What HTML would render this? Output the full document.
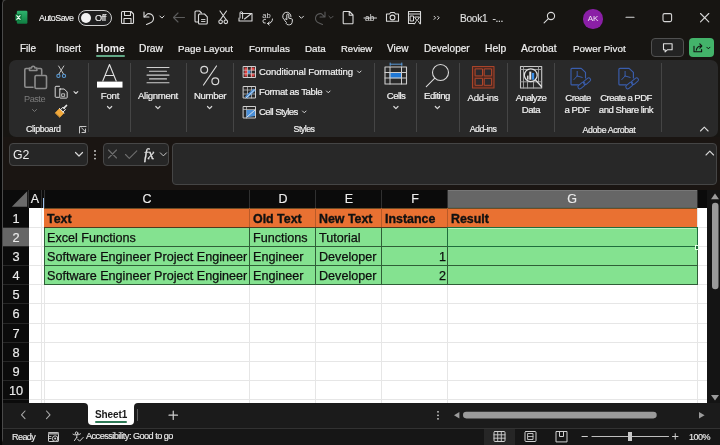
<!DOCTYPE html>
<html><head><meta charset="utf-8">
<style>
*{margin:0;padding:0;box-sizing:border-box}
html,body{width:720px;height:445px;overflow:hidden;background:#171512;font-family:"Liberation Sans",sans-serif;color:#e6e6e6}
.a{position:absolute}
.t{position:absolute;white-space:nowrap;line-height:1;will-change:transform}
svg{position:absolute;overflow:visible}
</style></head><body>
<div class="a" style="left:0;top:0;width:1.5px;height:445px;background:#050505"></div>
<div class="a" style="left:1.5px;top:-1.5px;width:740px;height:446px;border-left:1.8px solid #4a4a4a;border-top:1.5px solid #4a4a4a;border-bottom:1.5px solid #4a4a4a;border-radius:5px 0 0 6px"></div>
<svg style="left:0;top:0" width="40" height="30">
<defs><linearGradient id="xg" x1="0" y1="0" x2="0" y2="1"><stop offset="0" stop-color="#2fb36f"/><stop offset="0.5" stop-color="#1f9a58"/><stop offset="1" stop-color="#107c41"/></linearGradient></defs>
<rect x="16.8" y="10.7" width="10.6" height="13.1" rx="1.2" fill="url(#xg)"/>
<rect x="15.2" y="13.9" width="6.5" height="7" rx="0.8" fill="#107a3e"/>
<path d="M16.8 15.6 l3.3 3.7 M20.1 15.6 l-3.3 3.7" stroke="#f4fff8" stroke-width="1.1" stroke-linecap="round"/>
</svg>
<div class="t" style="left:39.00px;top:13.95px;font-size:8.9px;color:#f0f0f0;letter-spacing:-0.5px;-webkit-text-stroke:0.15px #f0f0f0">AutoSave</div>
<div class="a" style="left:78px;top:10px;width:34px;height:15.5px;border:1.3px solid #cfcfcf;border-radius:8px;background:#1e1e1e"></div>
<div class="a" style="left:80.5px;top:12.5px;width:10.8px;height:10.8px;border-radius:50%;background:#f2f2f2"></div>
<div class="t" style="left:95.30px;top:13.72px;font-size:9.2px;color:#f0f0f0;letter-spacing:-0.4px;-webkit-text-stroke:0.15px #f0f0f0">Off</div>
<div class="t" style="left:460.00px;top:13.80px;font-size:10.2px;color:#e0e0e0;letter-spacing:-0.3px;-webkit-text-stroke:0.1px #e0e0e0">Book1 &nbsp;-...</div>
<div class="a" style="left:583px;top:9px;width:19.5px;height:19.5px;border-radius:50%;background:#8a1fa6"></div>
<div class="t" style="left:532.75px;width:120px;text-align:center;top:14.56px;font-size:8px;color:#f0e6f4;">AK</div>
<div class="t" style="left:19.50px;top:43.62px;font-size:10px;color:#f0f0f0;-webkit-text-stroke:0.2px #f0f0f0">File</div>
<div class="t" style="left:55.50px;top:43.62px;font-size:10px;color:#f0f0f0;-webkit-text-stroke:0.2px #f0f0f0">Insert</div>
<div class="t" style="left:96.00px;top:43.59px;font-size:10.3px;color:#f0f0f0;font-weight:bold">Home</div>
<div class="t" style="left:138.50px;top:43.59px;font-size:10.3px;color:#f0f0f0;-webkit-text-stroke:0.2px #f0f0f0">Draw</div>
<div class="t" style="left:177.50px;top:43.65px;font-size:9.8px;color:#f0f0f0;-webkit-text-stroke:0.2px #f0f0f0">Page Layout</div>
<div class="t" style="left:248.50px;top:43.65px;font-size:9.8px;color:#f0f0f0;-webkit-text-stroke:0.2px #f0f0f0">Formulas</div>
<div class="t" style="left:305.00px;top:43.65px;font-size:9.8px;color:#f0f0f0;-webkit-text-stroke:0.2px #f0f0f0">Data</div>
<div class="t" style="left:340.50px;top:43.68px;font-size:9.5px;color:#f0f0f0;-webkit-text-stroke:0.2px #f0f0f0">Review</div>
<div class="t" style="left:386.70px;top:43.62px;font-size:10px;color:#f0f0f0;-webkit-text-stroke:0.2px #f0f0f0">View</div>
<div class="t" style="left:423.70px;top:43.62px;font-size:10px;color:#f0f0f0;-webkit-text-stroke:0.2px #f0f0f0">Developer</div>
<div class="t" style="left:485.30px;top:43.59px;font-size:10.3px;color:#f0f0f0;-webkit-text-stroke:0.2px #f0f0f0">Help</div>
<div class="t" style="left:520.80px;top:43.59px;font-size:10.3px;color:#f0f0f0;-webkit-text-stroke:0.2px #f0f0f0">Acrobat</div>
<div class="t" style="left:572.70px;top:43.64px;font-size:9.9px;color:#f0f0f0;-webkit-text-stroke:0.2px #f0f0f0">Power Pivot</div>
<div class="a" style="left:95.6px;top:54.8px;width:29.4px;height:2.2px;background:#62a886;border-radius:1px"></div>
<div class="a" style="left:651px;top:38px;width:33px;height:19px;border:1px solid #505050;border-radius:4px;background:#232323"></div>
<div class="a" style="left:689px;top:38px;width:24.8px;height:19px;border-radius:4px;background:#43b36a"></div>
<svg style="left:0;top:0" width="720" height="60" fill="none" stroke="#dadada" stroke-width="1.1" stroke-linecap="round" stroke-linejoin="round">
<!-- save -->
<path d="M122.5 11.5 h8.5 l2.5 2.5 v8.5 a1 1 0 0 1 -1 1 h-10 a1 1 0 0 1 -1 -1 v-10 a1 1 0 0 1 1 -1z"/>
<path d="M124.5 11.8 v3.7 h6 v-3.7"/>
<path d="M124 23.3 v-4.8 h7 v4.8"/>
<!-- undo -->
<path d="M144 12 v5 h5"/>
<path d="M144.3 16.8 l3.2 -3 a4.6 4.6 0 1 1 2.5 9.2 l-3.5 1.5" />
<path d="M159.8 16 l2.1 2.1 l2.1 -2.1" stroke-width="1"/>
<!-- back arrow dim -->
<path d="M173.5 17.5 h11 M173.5 17.5 l4.5 -4.5 M173.5 17.5 l4.5 4.5" stroke="#5c5c5c"/>
<!-- copy -->
<path d="M198.5 22 h-2.5 a1 1 0 0 1 -1 -1 v-9 a1 1 0 0 1 1 -1 h3.5 l2 2"/>
<path d="M199.5 14 h5 l2.8 2.8 v6.2 a1 1 0 0 1 -1 1 h-6.8 a1 1 0 0 1 -1 -1 v-8z"/>
<path d="M201.5 19.5 h3.5 M201.5 21.5 h3.5" stroke-width="0.9"/>
<!-- scissors -->
<path d="M220 11 l6.2 8.8 M226.5 11 l-6.2 8.8"/>
<circle cx="220.6" cy="21.8" r="1.8"/><circle cx="225.8" cy="21.8" r="1.8"/>
<!-- email/attach -->
<path d="M241 13.5 h11 v7.5 h-13 v-3"/>
<path d="M244.5 19 l7 -5.5"/>
<path d="M240 18 v-5 a1.3 1.3 0 0 1 2.6 0 v5.5" stroke-width="1"/>
<!-- spelling ab -->
<text x="262.2" y="17.6" font-size="7.6" font-family="Liberation Sans" fill="#dadada" stroke="none">ab</text>
<path d="M265.5 19.3 a2 2 0 0 0 -2.6 1.8 a2 2 0 0 0 2.4 2" stroke-width="1"/>
<path d="M272.5 19 c0 3 -2 4.5 -4.8 4.6 M267.6 23.6 l1.8 -1.8 M267.6 23.6 l1.6 1.4" stroke-width="1"/>
<!-- touch -->
<path d="M283.5 19 a4.2 4.2 0 1 1 7.5 -2.2" stroke-width="1"/>
<path d="M286.2 22.2 l-1.6 -1.9 a0.9 0.9 0 0 1 1.4 -1.1 l0.8 0.8 v-5 a1 1 0 0 1 2 0 v3.2 l2.6 0.5 a1.2 1.2 0 0 1 1 1.3 l-0.3 2.6 a2.6 2.6 0 0 1 -2.6 2.2 h-1.3 a2.2 2.2 0 0 1 -2 -1.2z" stroke-width="1"/>
<path d="M299.3 16.2 l2.1 2.1 l2.1 -2.1" stroke-width="1"/>
<!-- redo dim -->
<path d="M325 12 v5 h-5 M324.7 16.8 l-3.2 -3 a4.6 4.6 0 1 0 -2.5 9.2 l3.5 1.5" stroke="#5a5a5a"/>
<path d="M328.9 16.2 l2.1 2.1 l2.1 -2.1" stroke="#5a5a5a" stroke-width="1"/>
<!-- new doc -->
<path d="M344 11.5 h5.5 l3.5 3.5 v8 a0.8 0.8 0 0 1 -0.8 0.8 h-8.2 a0.8 0.8 0 0 1 -0.8 -0.8 v-10.7 a0.8 0.8 0 0 1 0.8 -0.8z M349.2 11.8 v3.5 h3.5"/>
<!-- strikethrough ab -->
<text x="365" y="21" font-size="8.5" font-family="Liberation Sans" fill="#dadada" stroke="none">ab</text>
<path d="M364 18 h12.5" stroke-width="1"/>
<!-- camera -->
<path d="M386.5 14 h3 l1.2 -1.5 h3.6 l1.2 1.5 h3 v7.3 h-12 z"/>
<circle cx="392.5" cy="17.5" r="2.4"/>
<!-- form -->
<path d="M408.5 11.5 h12 v12 M408.5 11.5 v12 h6 M408.5 14 h12"/>
<path d="M410.5 16 h3 v5 h-3z M415 17 h4.5 l-2.3 3.5z M416 21.5 l-1.5 2.5 M418.5 21.5 l1.5 2.5" stroke-width="1"/>
<!-- chevrons >> -->
<path d="M434 16.2 l1.6 1.6 l-1.6 1.6 M437.6 16.2 l1.6 1.6 l-1.6 1.6" stroke-width="1"/>
<!-- search -->
<circle cx="551" cy="16" r="3.6"/>
<path d="M548.4 18.6 l-4.3 4.3"/>
<!-- min max close -->
<path d="M626 17.3 h8" stroke="#d6d6d6"/>
<rect x="663" y="13.6" width="8.6" height="8" rx="1.5" stroke="#d6d6d6"/>
<path d="M700.5 13.5 l8.3 8.3 M708.8 13.5 l-8.3 8.3" stroke="#d6d6d6"/>
<!-- comment icon -->
<path d="M663.5 43.8 h8.6 v6 h-4.8 l-2.2 2 v-2 h-1.6 z" stroke="#e0e0e0" stroke-width="1.1"/>
<!-- share icon -->
<path d="M694 46.2 v5.6 h7.6 v-2.2" stroke="#111" stroke-width="1.1"/>
<path d="M696.3 50.3 c0.3 -2.5 2 -4.3 5 -4.3 M699.8 43.9 l2 2.1 l-2 2.1" stroke="#111" stroke-width="1.1"/>
<path d="M706.8 47.2 l1.6 1.6 l1.6 -1.6" stroke="#111" stroke-width="1"/>
</svg>
<div class="a" style="left:8.5px;top:60px;width:709px;height:77px;background:#292929;border-radius:7px"></div>
<div class="a" style="left:88.0px;top:63px;width:1px;height:69px;background:#454545"></div>
<div class="a" style="left:129.9px;top:63px;width:1px;height:69px;background:#454545"></div>
<div class="a" style="left:186.2px;top:63px;width:1px;height:69px;background:#454545"></div>
<div class="a" style="left:232.8px;top:63px;width:1px;height:69px;background:#454545"></div>
<div class="a" style="left:374.3px;top:63px;width:1px;height:69px;background:#454545"></div>
<div class="a" style="left:416.4px;top:63px;width:1px;height:69px;background:#454545"></div>
<div class="a" style="left:458.5px;top:63px;width:1px;height:69px;background:#454545"></div>
<div class="a" style="left:507.3px;top:63px;width:1px;height:69px;background:#454545"></div>
<div class="a" style="left:554.1px;top:63px;width:1px;height:69px;background:#454545"></div>
<div class="a" style="left:660.8px;top:63px;width:1px;height:69px;background:#454545"></div>
<svg style="left:0;top:0" width="720" height="140" fill="none" stroke="#d8d8d8" stroke-width="1.1" stroke-linecap="round" stroke-linejoin="round">
<!-- paste (disabled gray) -->
<g stroke="#8c8c8c" stroke-width="1.6">
<path d="M29 68.5 h-3 a1.2 1.2 0 0 0 -1.2 1.2 v16.3 a1.2 1.2 0 0 0 1.2 1.2 h7"/>
<path d="M38 68.5 h2.5 a1.2 1.2 0 0 1 1.2 1.2 v4.5"/>
<path d="M29.5 70.5 v-2.5 h2 a1.7 1.7 0 0 1 3.4 0 h2 v2.5 z"/>
<rect x="35" y="75.5" width="11.5" height="13" rx="1.2"/>
</g>
<path d="M32.5 109.5 l2 2 l2 -2" stroke="#777" stroke-width="1"/>
<!-- scissors blue -->
<path d="M58.6 66 l4.8 7.8 M63.8 66 l-4.8 7.8" stroke="#c4c4c4" stroke-width="1"/>
<g stroke="#5b9bd5" stroke-width="1.1">
<circle cx="58.4" cy="75.9" r="1.6"/><circle cx="64" cy="75.9" r="1.6"/>
</g>
<!-- copy -->
<path d="M59.5 86.3 h-3.5 a0.8 0.8 0 0 0 -0.8 0.8 v9.4 a0.8 0.8 0 0 0 0.8 0.8 h2.8" stroke-width="1"/>
<path d="M59.8 89 h4.4 l3 3 v5.5 a0.6 0.6 0 0 1 -0.6 0.6 h-6.2 a0.6 0.6 0 0 1 -0.6 -0.6 v-7.9 a0.6 0.6 0 0 1 0.6 -0.6z" stroke-width="1"/>
<path d="M62 93.8 h2.6 v2.6 h-2.6z" stroke-width="0.8"/>
<path d="M74 91.6 l1.9 1.9 l1.9 -1.9" stroke-width="1.1"/>
<!-- format painter -->
<path d="M55.3 112.8 l4.2 -4.3 l4.6 4.4 l-4.2 4.3 z" fill="#f2a93b" stroke="#f2a93b" stroke-width="0.6"/>
<path d="M59.5 108.5 l4.6 4.4 M60.6 109.5 l2.4 -2.3 l2.5 2.4 l-2.4 2.3" stroke="#e6e6e6" stroke-width="1"/>
<path d="M63.8 108.1 l2.8 -2.7" stroke="#e6e6e6" stroke-width="1.5"/>
<!-- dialog launcher -->
<path d="M79.5 133 v-6.5 h6.5 M81.5 127.8 l4 4 M85.5 129 v3.5 h-3.5" stroke-width="0.9"/>
<!-- Font A -->
<path d="M102.8 81 l6.7 -16.5 l6.7 16.5 M105.2 75.5 h8.6" stroke="#e0e0e0" stroke-width="1.1"/>
<rect x="97" y="81.6" width="25.5" height="6" fill="#ffffff" stroke="none"/>
<path d="M107.5 106.5 l2.1 2.1 l2.1 -2.1" stroke-width="1.2"/>
<!-- alignment -->
<path d="M147 67.5 h22 M149.5 71.3 h17 M147 75.1 h22 M149.5 78.9 h17 M147 82.7 h22" stroke="#cfcfcf" stroke-width="1.1"/>
<path d="M155.8 106.5 l2.1 2.1 l2.1 -2.1" stroke-width="1.2"/>
<!-- percent -->
<circle cx="204.2" cy="69.8" r="3.4" stroke-width="1.2"/>
<circle cx="215.3" cy="81.3" r="3.4" stroke-width="1.2"/>
<path d="M216.5 66 l-13 19" stroke-width="1.2"/>
<path d="M207.5 106.5 l2.1 2.1 l2.1 -2.1" stroke-width="1.2"/>
<!-- conditional formatting icon -->
<rect x="243.5" y="66.5" width="12" height="11" stroke="#cfcfcf" stroke-width="1"/>
<rect x="244.5" y="67.5" width="3" height="9" fill="#e04040" stroke="none"/>
<rect x="250.5" y="67.5" width="4" height="3" fill="#e04040" stroke="none"/>
<rect x="247.5" y="70.5" width="3" height="3" fill="#4a90d9" stroke="none"/>
<rect x="250.5" y="73.5" width="4" height="3" fill="#e04040" stroke="none"/>
<path d="M243.5 70.2 h12 M243.5 73.8 h12 M247.5 66.5 v11 M251.5 66.5 v11" stroke="#cfcfcf" stroke-width="0.7"/>
<!-- format as table -->
<rect x="243.5" y="86.5" width="12" height="11.5" stroke="#cfcfcf" stroke-width="1"/>
<path d="M243.5 90 h12 M243.5 94 h12 M247.5 86.5 v11.5 M251.5 86.5 v11.5" stroke="#cfcfcf" stroke-width="0.7"/>
<path d="M245 96.5 l8.5 -8 l2 2 l-8.5 8 z" fill="#4a90d9" stroke="none"/>
<path d="M246 98 l8.5 -8" stroke="#e8e8e8" stroke-width="0.8"/>
<!-- cell styles -->
<rect x="243.5" y="106.5" width="12" height="11.5" stroke="#cfcfcf" stroke-width="1"/>
<path d="M243.5 109.5 h12 M246.5 106.5 v11.5" stroke="#cfcfcf" stroke-width="0.7"/>
<path d="M246.5 110 h8.5 v6 l-8.5 1.5 z" fill="#4a90d9" stroke="none"/>
<path d="M247 117 l8 -7" stroke="#e8e8e8" stroke-width="0.9"/>
<path d="M357.5 71 l1.8 1.8 l1.8 -1.8 M326.5 91 l1.8 1.8 l1.8 -1.8 M302.5 111 l1.8 1.8 l1.8 -1.8" stroke-width="1"/>
<!-- cells -->
<path d="M390.2 64.2 h11.6 M390.2 63 v2.4 M401.8 63 v2.4" stroke="#5a9ad8" stroke-width="1"/>
<rect x="385" y="67" width="21.5" height="17" stroke="#cfcfcf" stroke-width="1.1"/>
<rect x="390" y="72.5" width="11.5" height="5.5" fill="#1f78d6" stroke="#6aa6e0" stroke-width="0.6"/>
<path d="M385 72.5 h21.5 M385 78 h21.5 M390 67 v17 M401.5 67 v17" stroke="#cfcfcf" stroke-width="1"/>
<path d="M393.8 106.5 l2.1 2.1 l2.1 -2.1" stroke-width="1.2"/>
<!-- editing magnifier -->
<circle cx="440.5" cy="72.5" r="8" stroke-width="1.1"/>
<path d="M434.8 78.2 l-8.5 8.5" stroke-width="1.1"/>
<path d="M435.3 106.5 l2.1 2.1 l2.1 -2.1" stroke-width="1.2"/>
<!-- add-ins -->
<rect x="472.5" y="66.5" width="21.5" height="21.5" fill="#4d2820" stroke="#a8442a" stroke-width="1.1"/>
<rect x="475.5" y="68.9" width="7" height="7" fill="#2a2a2e" stroke="#b0482c" stroke-width="1"/>
<rect x="484.6" y="68.9" width="7" height="7" fill="#2a2a2e" stroke="#b0482c" stroke-width="1"/>
<rect x="475.5" y="78.3" width="7" height="7" fill="#2a2a2e" stroke="#b0482c" stroke-width="1"/>
<rect x="484.6" y="78.3" width="7" height="7" fill="#2a2a2e" stroke="#b0482c" stroke-width="1"/>
<!-- analyze data -->
<rect x="520.5" y="66.5" width="21.2" height="21.5" stroke="#c8c8c8" stroke-width="1.1"/>
<path d="M520.5 69.5 h21.2 M520.5 81.8 h21.2 M523.5 66.5 v21.5 M527.5 81.8 v6.2 M533.5 81.8 v6.2 M538.5 66.5 v15.3" stroke="#a8a8a8" stroke-width="0.9"/>
<circle cx="530.8" cy="75.2" r="6.4" fill="#232323" stroke="#e2e2e2" stroke-width="1.2"/>
<path d="M535.4 79.9 l6 6.6" stroke="#e2e2e2" stroke-width="1.3"/>
<rect x="527" y="75.6" width="1.5" height="4" fill="#d8d8d8" stroke="none"/>
<rect x="529.3" y="71.6" width="2" height="8.1" fill="#e8e8e8" stroke="none"/>
<rect x="531.8" y="72.9" width="2.4" height="6.8" fill="#3a8ee6" stroke="none"/>
<!-- create pdf icons -->
<g stroke="#3a5eae" stroke-width="1.15">
<path d="M578.3 84.9 h-6.3 a1 1 0 0 1 -1 -1 v-14.6 a1 1 0 0 1 1 -1 h9.2 l4.3 4 v5.6"/>
<path d="M577.2 71.4 v4.6 M577.2 76 l-3.3 3.6 M577.2 76 l5 1.4" stroke-width="1"/>
<rect x="577.4" y="83.6" width="8.2" height="3.8" rx="1.9" transform="rotate(-40 581.5 85.5)" stroke-width="1"/>
<rect x="582.9" y="79.3" width="8.2" height="3.8" rx="1.9" transform="rotate(-40 587 81.2)" stroke-width="1"/>
</g>
<g stroke="#3a5eae" stroke-width="1.15" transform="translate(47.9,0)">
<path d="M578.3 84.9 h-6.3 a1 1 0 0 1 -1 -1 v-14.6 a1 1 0 0 1 1 -1 h9.2 l4.3 4 v5.6"/>
<path d="M577.2 71.4 v4.6 M577.2 76 l-3.3 3.6 M577.2 76 l5 1.4" stroke-width="1"/>
<rect x="577.4" y="83.6" width="8.2" height="3.8" rx="1.9" transform="rotate(-40 581.5 85.5)" stroke-width="1"/>
<rect x="582.9" y="79.3" width="8.2" height="3.8" rx="1.9" transform="rotate(-40 587 81.2)" stroke-width="1"/>
</g>
<!-- collapse -->
<path d="M700.5 131 l3.8 -3.8 l3.8 3.8" stroke-width="1.1"/>
</svg>
<div class="t" style="left:24.00px;top:95.22px;font-size:9.2px;color:#7c7c7c;letter-spacing:-0.5px">Paste</div>
<div class="t" style="left:26.00px;top:124.57px;font-size:8.8px;color:#f0f0f0;-webkit-text-stroke:0.2px #f0f0f0;letter-spacing:-0.35px">Clipboard</div>
<div class="t" style="left:49.60px;width:120px;text-align:center;top:91.37px;font-size:9.6px;color:#f0f0f0;-webkit-text-stroke:0.2px #f0f0f0;letter-spacing:-0.2px">Font</div>
<div class="t" style="left:98.00px;width:120px;text-align:center;top:91.37px;font-size:9.6px;color:#f0f0f0;-webkit-text-stroke:0.2px #f0f0f0;letter-spacing:-0.3px">Alignment</div>
<div class="t" style="left:149.60px;width:120px;text-align:center;top:91.37px;font-size:9.6px;color:#f0f0f0;-webkit-text-stroke:0.2px #f0f0f0;letter-spacing:-0.35px">Number</div>
<div class="t" style="left:258.75px;top:67.47px;font-size:9.6px;color:#f0f0f0;-webkit-text-stroke:0.2px #f0f0f0;letter-spacing:-0.12px">Conditional Formatting</div>
<div class="t" style="left:258.75px;top:87.47px;font-size:9.6px;color:#f0f0f0;-webkit-text-stroke:0.2px #f0f0f0;letter-spacing:-0.35px">Format as Table</div>
<div class="t" style="left:258.75px;top:107.47px;font-size:9.6px;color:#f0f0f0;-webkit-text-stroke:0.2px #f0f0f0;letter-spacing:-0.6px">Cell Styles</div>
<div class="t" style="left:243.80px;width:120px;text-align:center;top:125.37px;font-size:8.8px;color:#f0f0f0;-webkit-text-stroke:0.2px #f0f0f0;letter-spacing:-0.5px">Styles</div>
<div class="t" style="left:335.80px;width:120px;text-align:center;top:91.37px;font-size:9.6px;color:#f0f0f0;-webkit-text-stroke:0.2px #f0f0f0;letter-spacing:-0.6px">Cells</div>
<div class="t" style="left:377.40px;width:120px;text-align:center;top:91.37px;font-size:9.6px;color:#f0f0f0;-webkit-text-stroke:0.2px #f0f0f0;letter-spacing:-0.5px">Editing</div>
<div class="t" style="left:423.00px;width:120px;text-align:center;top:93.47px;font-size:9.6px;color:#f0f0f0;-webkit-text-stroke:0.2px #f0f0f0;letter-spacing:-0.25px">Add-ins</div>
<div class="t" style="left:422.50px;width:120px;text-align:center;top:125.37px;font-size:8.8px;color:#f0f0f0;-webkit-text-stroke:0.2px #f0f0f0;letter-spacing:-0.45px">Add-ins</div>
<div class="t" style="left:471.30px;width:120px;text-align:center;top:93.47px;font-size:9.6px;color:#f0f0f0;-webkit-text-stroke:0.2px #f0f0f0;letter-spacing:-0.5px">Analyze</div>
<div class="t" style="left:471.30px;width:120px;text-align:center;top:105.17px;font-size:9.6px;color:#f0f0f0;-webkit-text-stroke:0.2px #f0f0f0;letter-spacing:-0.5px">Data</div>
<div class="t" style="left:517.60px;width:120px;text-align:center;top:93.47px;font-size:9.6px;color:#f0f0f0;-webkit-text-stroke:0.2px #f0f0f0;letter-spacing:-0.55px">Create</div>
<div class="t" style="left:517.00px;width:120px;text-align:center;top:105.17px;font-size:9.6px;color:#f0f0f0;-webkit-text-stroke:0.2px #f0f0f0;letter-spacing:-0.4px">a PDF</div>
<div class="t" style="left:565.50px;width:120px;text-align:center;top:93.47px;font-size:9.6px;color:#f0f0f0;-webkit-text-stroke:0.2px #f0f0f0;letter-spacing:-0.6px">Create a PDF</div>
<div class="t" style="left:565.50px;width:120px;text-align:center;top:105.17px;font-size:9.6px;color:#f0f0f0;-webkit-text-stroke:0.2px #f0f0f0;letter-spacing:-0.5px">and Share link</div>
<div class="t" style="left:548.50px;width:120px;text-align:center;top:125.57px;font-size:8.8px;color:#f0f0f0;-webkit-text-stroke:0.2px #f0f0f0;letter-spacing:-0.38px">Adobe Acrobat</div>
<div class="a" style="left:3px;top:137px;width:717px;height:53px;background:#1a1512"></div>
<div class="a" style="left:9px;top:143px;width:78.5px;height:22.5px;background:#262626;border:1px solid #474747;border-radius:4px"></div>
<div class="t" style="left:12.50px;top:148.85px;font-size:12.3px;color:#ececec;">G2</div>
<div class="a" style="left:103px;top:143px;width:65.5px;height:22.5px;background:#262626;border:1px solid #474747;border-radius:4px"></div>
<div class="a" style="left:172px;top:143px;width:544.5px;height:41.5px;background:#282828;border:1px solid #454545;border-radius:4px"></div>
<svg style="left:0;top:0" width="720" height="190" fill="none" stroke="#d8d8d8" stroke-width="1.1" stroke-linecap="round" stroke-linejoin="round">
<path d="M75.5 152.5 l3.5 3.5 l3.5 -3.5" stroke-width="1.2"/>
<circle cx="95" cy="151" r="0.9" fill="#d8d8d8" stroke="none"/><circle cx="95" cy="154.8" r="0.9" fill="#d8d8d8" stroke="none"/><circle cx="95" cy="158.6" r="0.9" fill="#d8d8d8" stroke="none"/>
<path d="M108.5 150 l8 8 M116.5 150 l-8 8" stroke="#6e6e6e" stroke-width="1.1"/>
<path d="M125.5 154.5 l3.8 3.8 l7.5 -7.5" stroke="#6e6e6e" stroke-width="1.1"/>
<path d="M160.3 152.8 l3.1 3.1 l3.1 -3.1" stroke-width="0.9"/>
<path d="M706 155 l3.8 -3.8 l3.8 3.8" stroke-width="1.1"/>
</svg>
<div class="t" style="left:143.60px;top:147.95px;font-size:14px;color:#e2e2e2;font-family:Liberation Serif,serif;font-style:italic;-webkit-text-stroke:0.3px #e2e2e2">fx</div>
<div class="a" style="left:28.5px;top:208px;width:678.5px;height:195px;background:#fff"></div>
<div class="a" style="left:28.5px;top:226.59px;width:678.5px;height:1px;background:#e6e6e6"></div>
<div class="a" style="left:28.5px;top:245.77px;width:678.5px;height:1px;background:#e6e6e6"></div>
<div class="a" style="left:28.5px;top:264.95px;width:678.5px;height:1px;background:#e6e6e6"></div>
<div class="a" style="left:28.5px;top:284.14px;width:678.5px;height:1px;background:#e6e6e6"></div>
<div class="a" style="left:28.5px;top:303.32px;width:678.5px;height:1px;background:#e6e6e6"></div>
<div class="a" style="left:28.5px;top:322.51px;width:678.5px;height:1px;background:#e6e6e6"></div>
<div class="a" style="left:28.5px;top:341.69px;width:678.5px;height:1px;background:#e6e6e6"></div>
<div class="a" style="left:28.5px;top:360.88px;width:678.5px;height:1px;background:#e6e6e6"></div>
<div class="a" style="left:28.5px;top:380.06px;width:678.5px;height:1px;background:#e6e6e6"></div>
<div class="a" style="left:28.5px;top:399.25px;width:678.5px;height:1px;background:#e6e6e6"></div>
<div class="a" style="left:41.2px;top:208px;width:1px;height:195px;background:#e6e6e6"></div>
<div class="a" style="left:43.5px;top:208px;width:1px;height:195px;background:#e6e6e6"></div>
<div class="a" style="left:249.0px;top:208px;width:1px;height:195px;background:#e6e6e6"></div>
<div class="a" style="left:315.0px;top:208px;width:1px;height:195px;background:#e6e6e6"></div>
<div class="a" style="left:381.0px;top:208px;width:1px;height:195px;background:#e6e6e6"></div>
<div class="a" style="left:447.0px;top:208px;width:1px;height:195px;background:#e6e6e6"></div>
<div class="a" style="left:696.5px;top:208px;width:1px;height:195px;background:#e6e6e6"></div>
<div class="a" style="left:3px;top:189.5px;width:704px;height:18.5px;background:#0b0b0b"></div>
<div class="a" style="left:448px;top:189.5px;width:249.5px;height:18.5px;background:#666;border-top:1px solid #777;border-bottom:1px solid #566460"></div>
<div class="a" style="left:28.0px;top:189.5px;width:1px;height:18.5px;background:#303030"></div>
<div class="a" style="left:41.2px;top:189.5px;width:1px;height:18.5px;background:#303030"></div>
<div class="a" style="left:43.5px;top:189.5px;width:1px;height:18.5px;background:#303030"></div>
<div class="a" style="left:249.0px;top:189.5px;width:1px;height:18.5px;background:#303030"></div>
<div class="a" style="left:315.0px;top:189.5px;width:1px;height:18.5px;background:#303030"></div>
<div class="a" style="left:381.0px;top:189.5px;width:1px;height:18.5px;background:#303030"></div>
<div class="a" style="left:447.0px;top:189.5px;width:1px;height:18.5px;background:#303030"></div>
<div class="a" style="left:697.0px;top:189.5px;width:1px;height:18.5px;background:#303030"></div>
<div class="a" style="left:42.9px;top:197.5px;width:1px;height:10px;background:#9cc0ea"></div>
<svg style="left:0;top:0" width="720" height="445"><polygon points="27.2,191.3 27.2,206.8 11.8,206.8" fill="#6a6a6a"/></svg>
<div class="a" style="left:3px;top:208px;width:25.5px;height:195px;background:#0b0b0b"></div>
<div class="a" style="left:3px;top:227.59px;width:25.5px;height:18.19px;background:#666"></div>
<div class="a" style="left:3px;top:226.59px;width:25.5px;height:1px;background:#262626"></div>
<div class="a" style="left:3px;top:245.77px;width:25.5px;height:1px;background:#262626"></div>
<div class="a" style="left:3px;top:264.95px;width:25.5px;height:1px;background:#262626"></div>
<div class="a" style="left:3px;top:284.14px;width:25.5px;height:1px;background:#262626"></div>
<div class="a" style="left:3px;top:303.32px;width:25.5px;height:1px;background:#262626"></div>
<div class="a" style="left:3px;top:322.51px;width:25.5px;height:1px;background:#262626"></div>
<div class="a" style="left:3px;top:341.69px;width:25.5px;height:1px;background:#262626"></div>
<div class="a" style="left:3px;top:360.88px;width:25.5px;height:1px;background:#262626"></div>
<div class="a" style="left:3px;top:380.06px;width:25.5px;height:1px;background:#262626"></div>
<div class="a" style="left:3px;top:399.25px;width:25.5px;height:1px;background:#262626"></div>
<div class="t" style="left:-24.90px;width:120px;text-align:center;top:193.13px;font-size:12.5px;color:#ececec;-webkit-text-stroke:0.15px #ececec">A</div>
<div class="t" style="left:86.75px;width:120px;text-align:center;top:193.13px;font-size:12.5px;color:#ececec;-webkit-text-stroke:0.15px #ececec">C</div>
<div class="t" style="left:222.50px;width:120px;text-align:center;top:193.13px;font-size:12.5px;color:#ececec;-webkit-text-stroke:0.15px #ececec">D</div>
<div class="t" style="left:288.50px;width:120px;text-align:center;top:193.13px;font-size:12.5px;color:#ececec;-webkit-text-stroke:0.15px #ececec">E</div>
<div class="t" style="left:354.50px;width:120px;text-align:center;top:193.13px;font-size:12.5px;color:#ececec;-webkit-text-stroke:0.15px #ececec">F</div>
<div class="t" style="left:512.25px;width:120px;text-align:center;top:193.13px;font-size:12.5px;color:#ececec;-webkit-text-stroke:0.15px #ececec">G</div>
<div class="t" style="left:-44.25px;width:120px;text-align:center;top:212.50px;font-size:12.8px;color:#ececec;-webkit-text-stroke:0.15px #ececec">1</div>
<div class="t" style="left:-44.25px;width:120px;text-align:center;top:231.68px;font-size:12.8px;color:#ececec;-webkit-text-stroke:0.15px #ececec">2</div>
<div class="t" style="left:-44.25px;width:120px;text-align:center;top:250.87px;font-size:12.8px;color:#ececec;-webkit-text-stroke:0.15px #ececec">3</div>
<div class="t" style="left:-44.25px;width:120px;text-align:center;top:270.05px;font-size:12.8px;color:#ececec;-webkit-text-stroke:0.15px #ececec">4</div>
<div class="t" style="left:-44.25px;width:120px;text-align:center;top:289.24px;font-size:12.8px;color:#ececec;-webkit-text-stroke:0.15px #ececec">5</div>
<div class="t" style="left:-44.25px;width:120px;text-align:center;top:308.42px;font-size:12.8px;color:#ececec;-webkit-text-stroke:0.15px #ececec">6</div>
<div class="t" style="left:-44.25px;width:120px;text-align:center;top:327.61px;font-size:12.8px;color:#ececec;-webkit-text-stroke:0.15px #ececec">7</div>
<div class="t" style="left:-44.25px;width:120px;text-align:center;top:346.79px;font-size:12.8px;color:#ececec;-webkit-text-stroke:0.15px #ececec">8</div>
<div class="t" style="left:-44.25px;width:120px;text-align:center;top:365.98px;font-size:12.8px;color:#ececec;-webkit-text-stroke:0.15px #ececec">9</div>
<div class="t" style="left:-44.25px;width:120px;text-align:center;top:385.16px;font-size:12.8px;color:#ececec;-webkit-text-stroke:0.15px #ececec">10</div>
<div class="a" style="left:44.3px;top:208px;width:652.7px;height:19.59px;background:#e97132;border-bottom:1px solid #4f3a1e;border-top:1px solid #6e4c24"></div>
<div class="a" style="left:249.0px;top:208px;width:1px;height:18.59px;background:#b85a28"></div>
<div class="a" style="left:315.0px;top:208px;width:1px;height:18.59px;background:#b85a28"></div>
<div class="a" style="left:381.0px;top:208px;width:1px;height:18.59px;background:#b85a28"></div>
<div class="a" style="left:447.0px;top:208px;width:1px;height:18.59px;background:#b85a28"></div>
<div class="a" style="left:44.3px;top:227.59px;width:652.7px;height:57.55px;background:#84e290;border-bottom:1px solid #2f5e37"></div>
<div class="a" style="left:44.3px;top:245.77px;width:652.7px;height:1px;background:#2f5e37"></div>
<div class="a" style="left:44.3px;top:264.95px;width:652.7px;height:1px;background:#2f5e37"></div>
<div class="a" style="left:43.8px;top:227.59px;width:1px;height:57.55px;background:#2f5e37"></div>
<div class="a" style="left:249.0px;top:227.59px;width:1px;height:57.55px;background:#2f5e37"></div>
<div class="a" style="left:315.0px;top:227.59px;width:1px;height:57.55px;background:#2f5e37"></div>
<div class="a" style="left:381.0px;top:227.59px;width:1px;height:57.55px;background:#2f5e37"></div>
<div class="a" style="left:447.0px;top:227.59px;width:1px;height:57.55px;background:#2f5e37"></div>
<div class="a" style="left:696.5px;top:227.59px;width:1px;height:57.55px;background:#2f5e37"></div>
<div class="a" style="left:446.7px;top:226.59px;width:251.3px;height:20.89px;border:1.6px solid #1f6d3d"></div>
<div class="a" style="left:448.3px;top:228.19px;width:248px;height:1px;background:#b8f0be"></div>
<div class="a" style="left:694.6px;top:245.17px;width:4.4px;height:4.4px;background:#1f6d3d;border:0.6px solid #e8ffe8"></div>
<div class="t" style="left:47.20px;top:212.94px;font-size:12.4px;color:#111;font-weight:bold;-webkit-text-stroke:0.35px #111">Text</div>
<div class="t" style="left:252.50px;top:212.94px;font-size:12.4px;color:#111;font-weight:bold;-webkit-text-stroke:0.35px #111">Old Text</div>
<div class="t" style="left:318.50px;top:212.94px;font-size:12.4px;color:#111;font-weight:bold;-webkit-text-stroke:0.35px #111">New Text</div>
<div class="t" style="left:384.70px;top:212.94px;font-size:12.4px;color:#111;font-weight:bold;-webkit-text-stroke:0.35px #111">Instance</div>
<div class="t" style="left:450.80px;top:212.94px;font-size:12.4px;color:#111;font-weight:bold;-webkit-text-stroke:0.35px #111">Result</div>
<div class="t" style="left:47.20px;top:231.90px;font-size:12.6px;color:#0e0e0e;-webkit-text-stroke:0.25px #0e0e0e">Excel Functions</div>
<div class="t" style="left:252.50px;top:231.90px;font-size:12.6px;color:#0e0e0e;-webkit-text-stroke:0.25px #0e0e0e">Functions</div>
<div class="t" style="left:318.50px;top:231.90px;font-size:12.6px;color:#0e0e0e;-webkit-text-stroke:0.25px #0e0e0e">Tutorial</div>
<div class="t" style="left:47.20px;top:251.09px;font-size:12.6px;color:#0e0e0e;-webkit-text-stroke:0.25px #0e0e0e">Software Engineer Project Engineer</div>
<div class="t" style="left:252.50px;top:251.09px;font-size:12.6px;color:#0e0e0e;-webkit-text-stroke:0.25px #0e0e0e">Engineer</div>
<div class="t" style="left:318.70px;top:251.09px;font-size:12.6px;color:#0e0e0e;-webkit-text-stroke:0.25px #0e0e0e">Developer</div>
<div class="t" style="left:47.20px;top:270.27px;font-size:12.6px;color:#0e0e0e;-webkit-text-stroke:0.25px #0e0e0e">Software Engineer Project Engineer</div>
<div class="t" style="left:252.50px;top:270.27px;font-size:12.6px;color:#0e0e0e;-webkit-text-stroke:0.25px #0e0e0e">Engineer</div>
<div class="t" style="left:318.70px;top:270.27px;font-size:12.6px;color:#0e0e0e;-webkit-text-stroke:0.25px #0e0e0e">Developer</div>
<div class="t" style="left:438.50px;top:251.09px;font-size:12.6px;color:#0e0e0e;-webkit-text-stroke:0.25px #0e0e0e">1</div>
<div class="t" style="left:438.50px;top:270.27px;font-size:12.6px;color:#0e0e0e;-webkit-text-stroke:0.25px #0e0e0e">2</div>
<div class="a" style="left:707px;top:189.5px;width:13px;height:213.5px;background:#141414"></div>
<svg style="left:0;top:0" width="720" height="445" fill="none" stroke="none">
<polygon points="711,199.2 715,193.6 719,199.2" fill="#9c9c9c"/>
<rect x="712" y="202.7" width="6.5" height="86.5" rx="3.2" fill="#9a9a9a"/>
<polygon points="711,395 715,400.6 719,395" fill="#9c9c9c"/>
</svg>
<div class="a" style="left:3px;top:403px;width:717px;height:25px;background:#1b1b1b"></div>
<div class="a" style="left:3px;top:403px;width:85px;height:22px;background:#1b1b1b;border-top-right-radius:5px"></div>
<div class="a" style="left:88px;top:403px;width:45.5px;height:22px;background:#ffffff;border-radius:0 0 4px 4px"></div>
<div class="a" style="left:133.5px;top:403px;width:4px;height:4px;background:#ffffff"></div>
<div class="a" style="left:84px;top:403px;width:4px;height:4px;background:#ffffff"></div>
<div class="a" style="left:84px;top:403px;width:4px;height:5px;background:#1b1b1b;border-top-right-radius:4px"></div>
<div class="a" style="left:133.5px;top:403px;width:4px;height:5px;background:#1b1b1b;border-top-left-radius:4px"></div>
<div class="t" style="left:94.60px;top:409.82px;font-size:10px;color:#1a1a1a;font-weight:bold;letter-spacing:-0.12px">Sheet1</div>
<div class="a" style="left:94.5px;top:421px;width:32.5px;height:1.7px;background:#2f7a57;border-radius:1px"></div>
<div class="a" style="left:136.5px;top:409px;width:1px;height:12px;background:#5a5a5a"></div>
<svg style="left:0;top:0" width="720" height="445" fill="none" stroke="#cfcfcf" stroke-width="1.1" stroke-linecap="round" stroke-linejoin="round">
<path d="M25 411 l-3.5 3.8 l3.5 3.8" stroke="#a8a8a8"/>
<path d="M46.5 411 l3.5 3.8 l-3.5 3.8" stroke="#a8a8a8"/>
<path d="M169 415.2 h8.5 M173.25 411 v8.5" stroke-width="1.2"/>
<circle cx="438" cy="411.8" r="0.9" fill="#d0d0d0" stroke="none"/><circle cx="438" cy="415.3" r="0.9" fill="#d0d0d0" stroke="none"/><circle cx="438" cy="418.8" r="0.9" fill="#d0d0d0" stroke="none"/>
<polygon points="459.4,411.9 454,415.2 459.4,418.6" fill="#9c9c9c" stroke="none"/>
<rect x="463" y="411.8" width="193.7" height="6.6" rx="3.3" fill="#9a9a9a" stroke="none"/>
<polygon points="699,411.9 704.6,415.2 699,418.6" fill="#9c9c9c" stroke="none"/>
</svg>
<div class="a" style="left:3px;top:427.5px;width:717px;height:1px;background:#323232"></div>
<div class="a" style="left:3px;top:428.5px;width:717px;height:17px;background:#161616"></div>
<div class="a" style="left:484px;top:428.5px;width:31px;height:17px;background:#262626"></div>
<div class="t" style="left:11.50px;top:432.94px;font-size:9px;color:#ececec;letter-spacing:-0.55px;-webkit-text-stroke:0.15px #ececec">Ready</div>
<div class="t" style="left:85.80px;top:432.32px;font-size:9.2px;color:#ececec;letter-spacing:-0.55px;-webkit-text-stroke:0.15px #ececec">Accessibility: Good to go</div>
<div class="t" style="left:688.60px;top:432.74px;font-size:9px;color:#ececec;letter-spacing:-0.5px;-webkit-text-stroke:0.15px #ececec">100%</div>
<svg style="left:0;top:0" width="720" height="445" fill="none" stroke="#d0d0d0" stroke-width="1.1" stroke-linecap="round" stroke-linejoin="round">
<rect x="48.5" y="432.5" width="10" height="9" rx="0.6" stroke-width="1"/>
<rect x="48" y="432.6" width="10.8" height="2" fill="#9a9a9a" stroke="none"/>
<path d="M49.5 436.5 h1.5 M49.5 438.5 h1.5" stroke-width="0.9"/>
<circle cx="55.2" cy="438.6" r="2.8" fill="#161616" stroke-width="1"/>
<circle cx="55.2" cy="438.6" r="1" fill="#d8d8d8" stroke="none"/>
<circle cx="76.6" cy="433.2" r="1.3" stroke-width="1"/>
<path d="M73 434.2 c1.5 0.8 2.3 0.8 3 0.6 M80.5 433.8 c-1.2 0.9 -2.2 1 -3 1 M76.8 434.8 v3 M76.8 437.3 l-2.4 3.4 M77.8 439.3 l1.8 1.9 l3.6 -3.8" stroke-width="1"/>
<rect x="494" y="431.5" width="11" height="10" rx="1" stroke-width="1"/>
<path d="M494 434.8 h11 M494 438.2 h11 M497.7 431.5 v10 M501.3 431.5 v10" stroke-width="0.9"/>
<rect x="525" y="431.5" width="11" height="10" rx="1" stroke-width="1"/>
<rect x="528" y="433.5" width="5" height="6" stroke-width="0.9"/>
<path d="M528 436.5 h5" stroke-width="0.8"/>
<path d="M556 441.5 v-10 h11 v10 z M559.5 431.5 v5 h4 v-5" stroke-width="1"/>
<path d="M582 436.5 h5.4" stroke-width="1"/>
<path d="M592 436.5 h76.5" stroke="#bdbdbd" stroke-width="1.2"/>
<rect x="628" y="432" width="4" height="9" fill="#c8c8c8" stroke="none"/>
<path d="M672.5 436.5 h5.5 M675.25 433.7 v5.5" stroke-width="1"/>
</svg>
</body></html>
